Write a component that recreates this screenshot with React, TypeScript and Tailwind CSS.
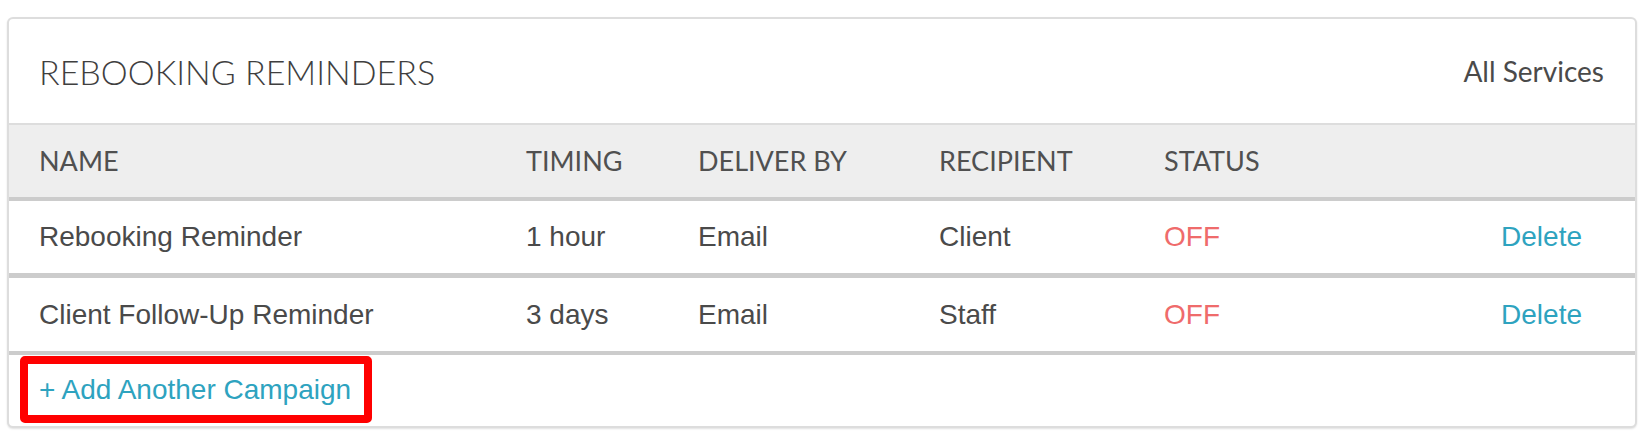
import React from 'react';

interface Campaign {
  name: string;
  timing: string;
  deliverBy: string;
  recipient: string;
  status: string;
}

const campaigns: Campaign[] = [
  { name: 'Rebooking Reminder', timing: '1 hour', deliverBy: 'Email', recipient: 'Client', status: 'OFF' },
  { name: 'Client Follow-Up Reminder', timing: '3 days', deliverBy: 'Email', recipient: 'Staff', status: 'OFF' },
];

const heading = "font-['Lato',sans-serif]";
const body = "font-['Liberation_Sans',Arial,sans-serif]";
const cols = 'grid grid-cols-[487px_172px_241px_225px_1fr_auto] items-center pl-[30px] pr-[53px]';

const App: React.FC = () => {
  return (
    <div className="w-[1646px] h-[440px] bg-white pt-[17px] pl-[7px]">
      <div className="w-[1630px] h-[411px] border-2 border-[#dddddd] rounded-md bg-white shadow-[0_1px_2px_rgba(0,0,0,0.12)] overflow-hidden">
        <div className={`h-[104px] flex items-center justify-between pl-[30px] pr-[31px] ${heading}`}>
          <h2 className="text-[34px] font-light text-[#3f3f3f]">REBOOKING REMINDERS</h2>
          <span className="text-[28px] text-[#4a4a4a]">All Services</span>
        </div>

        <div className={`${cols} h-[78px] bg-[#eeeeee] border-t-2 border-[#dddddd] border-b-4 border-b-[#cccccc] text-[27px] text-[#505050] ${heading}`}>
          <span>NAME</span>
          <span>TIMING</span>
          <span>DELIVER BY</span>
          <span>RECIPIENT</span>
          <span>STATUS</span>
          <span></span>
        </div>

        {campaigns.map((c, i) => (
          <div
            key={c.name}
            className={`${cols} ${i === 0 ? 'h-[77px] border-b-[5px]' : 'h-[77px] border-b-4'} border-[#cccccc] text-[28px] text-[#4a4a4a] ${body}`}
          >
            <span>{c.name}</span>
            <span>{c.timing}</span>
            <span>{c.deliverBy}</span>
            <span>{c.recipient}</span>
            <span className="text-[#ef6b6b]">{c.status}</span>
            <span className="text-[#2ea3bf]">Delete</span>
          </div>
        ))}

        <div className="pt-px pl-[11px]">
          <div className={`w-[352px] h-[67px] border-8 border-[#ff0000] rounded-[5px] flex items-center pl-[11px] text-[28px] text-[#2ea3bf] ${body}`}>
            + Add Another Campaign
          </div>
        </div>
      </div>
    </div>
  );
};

export default App;
